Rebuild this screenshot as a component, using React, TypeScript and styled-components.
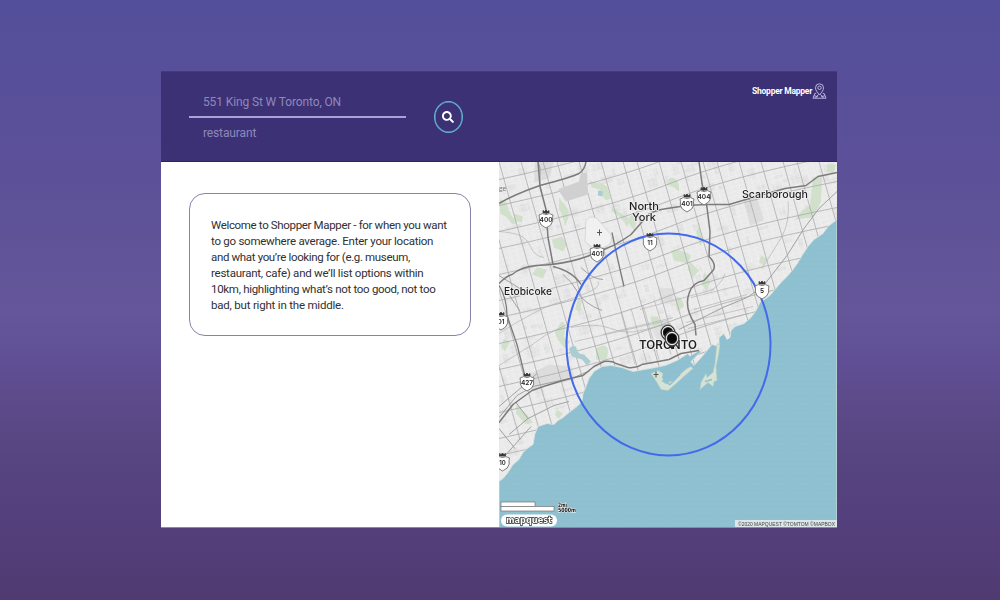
import React from "react";
import styled, { createGlobalStyle } from "styled-components";
import { FaSearch } from "react-icons/fa";

const GlobalStyle = createGlobalStyle`
  * { box-sizing: border-box; }
  html, body { margin: 0; }
  body { font-family: Roboto, "Liberation Sans", sans-serif; }
`;

const Page = styled.div`
  height: 600px;
  padding: 71px 163px 72px 161px;
  background: linear-gradient(#544f9a, #584f9a 15%, #5e5298 35%, #645699 52%, #604f95 60%, #5c4a88 68%, #55437f 80%, #533e7a 90%, #4f3b70);
`;

const Window = styled.main`
  display: flex;
  flex-direction: column;
  height: 457px;
  border-bottom: 1px solid #8d86b4;
  background: #fff;
`;

const Header = styled.header`
  display: flex;
  align-items: flex-start;
  height: 91px;
  padding-left: 28px;
  background: #3b3174;
  border-top: 1px solid #443a80;
  border-bottom: 1px solid #30245f;
`;

const Form = styled.form`
  display: flex;
  flex: 1;
  gap: 28px;
`;

const Fields = styled.div`
  display: flex;
  flex-direction: column;
  width: 217px;
  padding-top: 15px;
`;

const Field = styled.div<{ $lined?: boolean; $spacing: string }>`
  height: 31px;
  padding: 0 14px;
  line-height: 31px;
  font-size: 12px;
  letter-spacing: ${(p) => p.$spacing};
  color: #9088bc;
  border-bottom: ${(p) => (p.$lined ? "2px solid #aaa3da" : "0")};
`;

const SearchButton = styled.button`
  display: flex;
  align-items: center;
  justify-content: center;
  width: 29px;
  height: 32px;
  margin-top: 29px;
  padding: 0 1px 0 0;
  color: #fff;
  font-size: 12px;
  background: transparent;
  border: 1.5px solid #64b6cf;
  border-radius: 50%;
  box-shadow: inset 0 0 0 0.5px #64b6cf;
`;

const Brand = styled.div`
  display: flex;
  align-items: center;
  height: 16px;
  margin: 11px 10px 0 0;
  color: #fff;
  font-size: 8.5px;
  font-weight: 700;
  letter-spacing: -0.25px;
  white-space: nowrap;
`;

const Content = styled.div`
  display: flex;
  flex: 1;
  min-height: 0;
`;

const Side = styled.section`
  width: 338px;
  padding: 31px 28px;
`;

const Card = styled.div`
  height: 143px;
  width: 282px;
  padding: 24px 21px;
  border: 1px solid #8983a5;
  border-radius: 16px;
  background: #fff;
`;

const Line = styled.span<{ $spacing: number }>`
  display: block;
  color: #303033;
  font-size: 11.5px;
  line-height: 15.9px;
  letter-spacing: ${(p) => p.$spacing}px;
  white-space: nowrap;
`;

const MapSvg = styled.svg`
  display: block;
  width: 338px;
  height: 365px;
`;

const welcome: [string, number][] = [
  ["Welcome to Shopper Mapper - for when you want", -0.34],
  ["to go somewhere average. Enter your location", -0.25],
  ["and what you’re looking for (e.g. museum,", -0.35],
  ["restaurant, cafe) and we’ll list options within", -0.24],
  ["10km, highlighting what’s not too good, not too", -0.3],
  ["bad, but right in the middle.", -0.2],
];

const PinLogo = () => (
  <svg width="15" height="16" viewBox="0 0 15 16" fill="none" stroke="#c9c3ea" strokeWidth=".9">
    <path d="M7.500 12C5 8.800 3.500 7.200 3.500 4.800a4 4 0 0 1 8 0c0 2.400-1.500 4-4 7.200Z" />
    <circle cx="7.500" cy="4.800" r="1.700" />
    <path d="M4.200 10.200 2.800 10.600 1 15.200h13l-1.800-4.600-1.400-.4M3.500 15l3-3.500M11.500 15l-3-3.500M2.200 12.800l3.500.8M12.800 12.800l-3.500.8" />
  </svg>
);

const coast =
  "M837 220 828 227 823 234 814 240 808 247 802 256 798 263 793 270 788 276 781 283 775 290 770 296 760 303 756 311 751 318 744 324 735 327 731 331 730 338 727 340 724 334 719 338 719 347 712 345 703 356 694 366 691 362 702 351 690 357 688 354 677 361 665 366 650 369 633 372 622 368 611 366 602 367 594 372 589 379 586 387 583 394 582 402 577 407 569 413 563 418 558 421 554 425 547 424 538 427 535 434 533 445 527 449 523 453 519 460 513 465 508 473 503 479 499 482 V528 H837Z";

const ewStreets = Array.from({ length: 19 }, (_, i) => 180 + i * 23 + (i % 3) * 3);
const nsStreets = Array.from({ length: 22 }, (_, i) => 397 + i * 20 + (i % 4) * 2);
const blocks = Array.from({ length: 300 }, (_, i) => ({
  x: 495 + ((i * 73) % 347),
  y: 160 + ((i * 47 + i * i * 3) % 310),
  w: 3 + ((i * 7) % 9),
  h: 3 + ((i * 5) % 8),
}));

const parks = [
  "M500 200q6 0 8 8t9 14q-3 6-7 0t-10-8Z",
  "M514 214l9 3-1 6-8-2Z",
  "M559 198q6 7 9 12t-3 17q-2-12-6-17Z",
  "M599 182l8 5 4 12-5 2-6-7Z",
  "M612 208q10 6 18 12l-3 8q-4-10-15-16Z",
  "M630 216l8 1-4 14-6-8Z",
  "M552 240l10-3 5 8-4 7-9-4Z",
  "M589 181l10 3 2 6-9-2Z",
  "M670 178q10 0 9 14l-5-4-7-3Z",
  "M699 227l5 15-4 4-4-14Z",
  "M671 251q9-2 20 5l-3 8-14-3Z",
  "M690 262l9 9-6 7-5-8Z",
  "M813 178l9 0-1 24-8 16-18 2 7-9 8-5Z",
  "M827 165l9 0-3 9-6-2Z",
  "M761 256l6 3-3 7-5-3Z",
  "M537 268l10 2-4 9-11-4Z",
  "M560 324q7-6 4 14l6 4-5 7q-8-8-10-16Z",
  "M596 349q10-7 12 2l-1 10-11-1Z",
  "M578 299l4 1-2 12-5-2Z",
  "M516 405q9 7 17 18l-7 2-10-11Z",
  "M557 410l6 4-4 5-4-3Z",
  "M675 297q8 0 9 10l-7 5Z",
  "M504 339l6 3-5 10-4-5Z",
  "M650 317l8 0 3 8-8 2Z",
  "M704 272l6 10-3 10-5-7Z",
];

const Shield = ({ x, y, n, size = 6.5 }: { x: number; y: number; n: string; size?: number }) => (
  <g transform={`translate(${x} ${y})`}>
    <path d="M-3-9v2.500h6v-2.500l-1.500 1L0-9.500-1.500-8Z" fill="#333" stroke="#444" strokeWidth=".8" />
    <path d="M-7-4.500Q-3.500-7 0-5 3.500-7 7-4.500 6.200-2 6.700 1.500 6 6 0 8.500-6 6-6.700 1.500-6.200-2-7-4.500Z" fill="#fff" stroke="#5c5c5c" strokeWidth=".8" />
    <text y="2.500" textAnchor="middle" fontFamily="Inter, sans-serif" fontWeight="600" fontSize={size} fill="#222">{n}</text>
  </g>
);

const Marker = ({ x, y }: { x: number; y: number }) => (
  <g transform={`translate(${x} ${y})`}>
    <path d="M-6 4 0 11 6 4Z" fill="#111" />
    <ellipse rx="7.300" ry="7.800" fill="#222" stroke="#777" strokeWidth=".5" />
    <ellipse rx="5.700" ry="6.100" fill="#333" stroke="#eee" strokeWidth="1.100" />
    <circle r="4.500" fill="#090909" />
  </g>
);

const placeFont = "Inter, 'Liberation Sans', sans-serif";
const Place = ({ x, y, w, size = 11, weight = 500, children }: { x: number; y: number; w: number; size?: number; weight?: number; children: string }) => (
  <text x={x} y={y} textLength={w} lengthAdjust="spacingAndGlyphs" fontFamily={placeFont} fontSize={size} fontWeight={weight} fill="#1e1e1e" stroke="#f3f3f3" strokeWidth="1.500" paintOrder="stroke">
    {children}
  </text>
);

const CityMap = () => (
  <MapSvg viewBox="499 162.500 338 365" role="img" aria-label="Map of Toronto">
    <defs>
      <pattern id="lanes" width="7" height="5" patternUnits="userSpaceOnUse" patternTransform="rotate(-15)">
        <path d="M0 .5h7M.5 0v5M4 2.500h3" stroke="#f5f5f5" strokeWidth=".6" />
      </pattern>
      <pattern id="waves" width="6" height="5" patternUnits="userSpaceOnUse">
        <path d="M0 2q1.500-1.500 3 0t3 0" fill="none" stroke="#86bacb" strokeWidth=".6" />
      </pattern>
    </defs>
    <rect x="499" y="162" width="338" height="366" fill="#e9e9e9" />
    <g fill="#dadada" opacity=".6">
      {blocks.map((b, i) => (
        <rect key={i} x={b.x} y={b.y} width={b.w} height={b.h} transform={`rotate(-15 ${b.x} ${b.y})`} />
      ))}
    </g>
    <rect x="499" y="162" width="338" height="366" fill="url(#lanes)" opacity=".7" />
    <g fill="#d4d4d4">
      <path d="M535 162h19l-5 17-15 4ZM742 196l14-2 8 27-14 5ZM531 374l18-9 22 2 4 13-43 10-9-7Z" opacity=".65" />
      <path d="M659 288l16 1-2 12-13 3ZM650 325l18-4 10 15-20 7Z" opacity=".5" />
    </g>
    <g fill="#ccdec5" opacity=".85">
      {parks.map((d) => <path key={d} d={d} />)}
    </g>
    <g fill="none" stroke="#ababab" strokeWidth=".8">
      {ewStreets.map((y) => <path key={y} d={`M499 ${y}Q610 ${y - 24} 670 ${y - 48}T837 ${y - 93}`} />)}
      {nsStreets.map((x) => <path key={x} d={`M${x} 162 L${x + 36} 290 L${x + 79} 440`} />)}
    </g>
    <path d="M558 190l21-8 2-8 6-1 1 22-22 7Z" fill="#d0d0d0" />
    <path d="M586 221q4-6 11-2l13 15q4 7-2 12l-12 5-11-9Z" fill="#f1f1f1" stroke="#cfcfcf" strokeWidth=".7" />
    <g fill="none" stroke="#ababab" strokeWidth=".6">
      <path d="M571 328q25-5 40 1t30 2 30-7M575 342l92-21M603 335l70-17M640 310l74-20M621 313l14 52M631 309l16 55M643 306l16 54M654 300l17 55M686 323l67-16M688 329l60-15M691 298l48-12M694 310l53-15" />
      <path d="M499 232q14 1 21 4t11 12 13 10M499 334q15-10 32-19t25-11 27-9 15-13M499 366l32-20 14-10 24-12M725 274q-3 10-14 17M788 202q2 20-6 35l-20 32" />
    </g>
    <g fill="none" stroke="#989898" strokeWidth=".9">
      <path d="M499 418l18-22 16-9 41-9 16-7M563 275q9 7 15 18t24 18M581 268q12 12 22 12M837 192l-18 17-15 20-17 27-25 32-15 10-24 10-18 9-26 13M499 407l27-23 11-10M509 435l19-16 26-13 15-4M515 449l-16-20M528 419l-12-16M499 463l32-36" />
      <path d="M507 292l13 20M499 276l24 15M538 162q3 6 2 14t1 16" />
    </g>
    <path d={coast} fill="#90c1d1" />
    <path d={coast} fill="url(#waves)" stroke="#d9e3dc" strokeWidth=".9" />
    <g fill="#d5e2d5" stroke="#b7cdbd" strokeWidth=".5">
      <path d="M651 374l7-3 5 3-1 4 3 6 9-3 6-6 7-6 4-2 2 2-8 7-10 9-7 6-7-1-4-7Z" />
      <path d="M717 344l3 2-2 12-2 9 1 14-3 1-1 5-5-4-8 7 1-7 5-9 1 4 6-5 2-9Z" />
    </g>
    <path d="M662 381l8 4 10-10M676 387l9-8M705 382l7-2M673 369l15-9M688 359l12-7" stroke="#90c1d1" strokeWidth="1.500" fill="none" />
    <path d="M569 350q2-5 7-3 1 8 8 8l7 7-4 4-5-6-10-3ZM598 191l5 1-1 5-4-1Z" fill="#a9cdd3" />
    <g fill="none" stroke="#7b7b7b" strokeWidth="1.500" strokeLinejoin="round">
      <path d="M499 423l14-18 19-14q28-10 51-15l11-9 10-5q8-1 12 2l12 4q8 1 14-3l27-5 12-6 18-3" />
      <path d="M499 204q15-9 41-18 31-8 39-12 6-4 7-12M499 284q8-8 13-9 10-8 24-9 37-1 65-15 13-4 30-16l14-16q3-7 22-10l20-3 20-1h22l17-5 39-11 21-3 12-9 24-5" />
      <path d="M538 162l2 25 6 23 2 28 5 27M699 162l3 22 5 24 3 24-1 25q8 8 4 14l-9 10q-12 2-15 13-5 14 6 31l1 11" />
      <path d="M499 286q8 13 8 30l10 29 10 40M553 267q20 5 28 18M612 233q4 20 12 54" strokeWidth="1.300" />
    </g>
    <text x="499" y="191" fontFamily="Lato, sans-serif" fontSize="7" fill="#777">ge</text>
    <path d="M599.500 230v6M597 233h5M656 372v6M653.500 375h5" stroke="#555" fill="none" />
    <ellipse cx="668.500" cy="345" rx="102" ry="111" fill="none" stroke="#426aeb" strokeWidth="2" />
    <Shield x={546} y={220} n="400" /><Shield x={597} y={254} n="401" />
    <Shield x={687} y={204} n="401" /><Shield x={704} y={197} n="404" />
    <Shield x={650} y={243} n="11" /><Shield x={762} y={291} n="5" />
    <Shield x={527} y={383} n="427" /><Shield x={501} y={322} n="01" />
    <Shield x={502.500} y={463} n="10" size={6} />
    <Place x={629} y={210} w={30}>North</Place>
    <Place x={632} y={221.500} w={24}>York</Place>
    <Place x={742} y={198} w={66}>Scarborough</Place>
    <Place x={504} y={295} w={48} size={10}>Etobicoke</Place>
    <Place x={639} y={349.500} w={58} weight={600} size={11.5}>TORONTO</Place>
    <Marker x={668} y={333} /><Marker x={672} y={339} />
    <g fill="#fff" stroke="#777" strokeWidth=".7">
      <rect x="501" y="502.500" width="34" height="4.500" />
      <rect x="501" y="507" width="53" height="4.500" />
    </g>
    <g fontFamily="'DejaVu Sans', sans-serif" fontSize="6" fontWeight="700" fill="#111" stroke="#fff" strokeWidth="1" paintOrder="stroke">
      <text x="558" y="507" textLength="9" lengthAdjust="spacingAndGlyphs">2mi</text>
      <text x="558" y="512" textLength="18" lengthAdjust="spacingAndGlyphs">5000m</text>
    </g>
    <rect x="501" y="515" width="56" height="12" rx="6" fill="#fff" />
    <text x="506" y="523.500" textLength="46" lengthAdjust="spacingAndGlyphs" fontFamily="'DejaVu Sans', sans-serif" fontSize="9" fontWeight="700" fill="#fff" stroke="#222" strokeWidth="1.400" paintOrder="stroke">mapquest</text>
    <rect x="735" y="520.500" width="102" height="7" fill="#dde6e8" />
    <text x="738" y="526" textLength="97" lengthAdjust="spacingAndGlyphs" fontFamily="'Liberation Sans', sans-serif" fontSize="5.700" fill="#444">©2020 MAPQUEST ©TOMTOM ©MAPBOX</text>
  </MapSvg>
);

export default function App() {
  return (
    <Page>
      <GlobalStyle />
      <Window>
        <Header>
          <Form>
            <Fields>
              <Field $lined $spacing="-0.12px">551 King St W Toronto, ON</Field>
              <Field $spacing="-0.13px">restaurant</Field>
            </Fields>
            <SearchButton type="button" aria-label="Search"><FaSearch /></SearchButton>
          </Form>
          <Brand>Shopper Mapper<PinLogo /></Brand>
        </Header>
        <Content>
          <Side>
            <Card>
              {welcome.map(([text, spacing]) => <Line key={text} $spacing={spacing}>{text}</Line>)}
            </Card>
          </Side>
          <CityMap />
        </Content>
      </Window>
    </Page>
  );
}
